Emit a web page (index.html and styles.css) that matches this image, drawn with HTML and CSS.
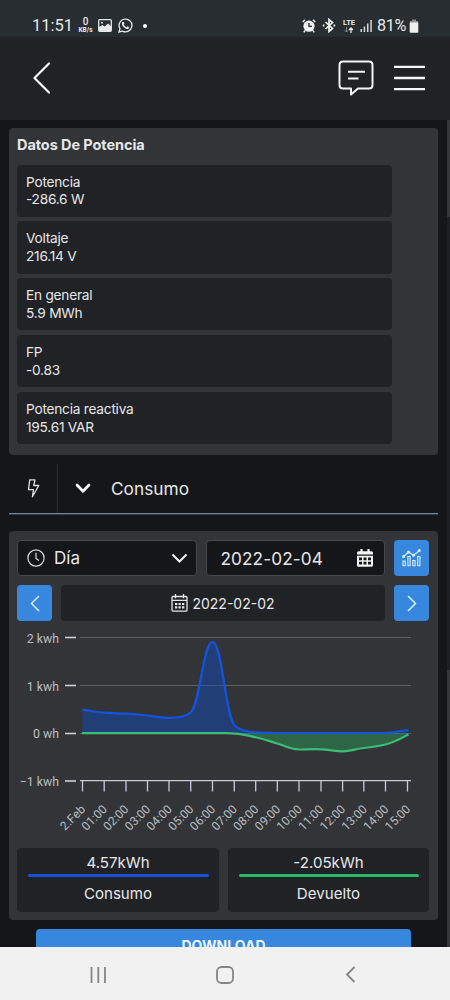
FILE: index.html
```html
<!DOCTYPE html>
<html lang="es">
<head>
<meta charset="utf-8">
<meta name="viewport" content="width=device-width">
<title>Datos De Potencia</title>
<link rel="stylesheet" href="styles.css">
</head>
<body>
<div class="phone">
  <div class="status">
    <span class="time">11:51</span>
    <span class="speed"><b>0</b><small>KB/s</small></span>
    <svg class="s-img" width="14" height="13" viewBox="0 0 14 13"><rect x=".7" y=".7" width="12.6" height="11.6" rx="1" fill="none" stroke="#e6e8e9" stroke-width="1.3"/><path d="M1 8 4.500 6 6.500 7.500 10 4.500 13 7V12H1Z" fill="#e6e8e9"/><circle cx="4" cy="3.700" r="1" fill="#e6e8e9"/></svg>
    <svg class="s-wa" width="15" height="15" viewBox="0 0 15 15" fill="none" stroke="#e6e8e9"><path d="M1 14 2 10.7A6.4 6.4 0 1 1 4.5 13.1Z" stroke-width="1.3"/><path d="M5.2 4.3C4.2 5 4.5 6.700 6.200 8.500S9.500 10.900 10.600 9.800" stroke-width="1.6"/><path d="m5 4.200 .9 1.600M8.900 9l1.700.8" stroke-width="1.600"/></svg>
    <i class="dot"></i>
    <span class="grow"></span>
    <svg width="14" height="14" viewBox="0 0 14 14"><path d="M3 .8.8 3M11 .8 13.200 3M3 11.500 1.800 13.300M11 11.500l1.200 1.800" stroke="#f0f1f1" stroke-width="1.500"/><circle cx="7" cy="7.200" r="5.600" fill="#f0f1f1"/><path d="M7 4v3.400h3" fill="none" stroke="#272d30" stroke-width="1.400"/></svg>
    <svg class="s-bt" width="14" height="15" viewBox="0 0 14 15" fill="none" stroke="#f0f1f1" stroke-width="1.700"><path d="m3.500 4 7 6.500L7 13.500v-12l3.500 3-7 6.500"/><path d="M.8 7.500h1.700M11.500 7.500h1.700" stroke-width="2"/></svg>
    <span class="lte">LTE<svg width="10" height="6" viewBox="0 0 10 6" fill="none" stroke="#e6e8e9"><path d="M2.500 0v5M.8 3.300l1.700 1.700 1.700-1.700" stroke="#8d9294" stroke-width=".9"/><path d="M7 6V1M5 3l2-2 2 2" stroke-width="1.300"/></svg></span>
    <svg class="s-sig" width="13" height="13" viewBox="0 0 13 13" fill="#d7dadb"><path d="M.5 10H2v3H.5zM3.700 7.500h1.500V13H3.700zM7 4.500h1.500V13H7zM10.300 1h1.500v12h-1.500z"/></svg>
    <span class="pct">81%</span>
    <svg class="s-bat" width="10" height="14" viewBox="0 0 10 14"><path d="M3 .5h4V2h2v2H1V2h2z" fill="#8d9294"/><path d="M.7 3.500h8.600V13q0 .8-.8.800h-7q-.8 0-.8-.8z" fill="#f0f1f1"/></svg>
  </div>

  <header class="header">
    <svg width="18" height="32" viewBox="0 0 18 32" fill="none" stroke="#fafafa" stroke-width="2.200" stroke-linecap="round" stroke-linejoin="round"><path d="M16 1.500 1.500 16 16 30.500"/></svg>
    <span class="grow"></span>
    <svg width="36" height="36" viewBox="0 0 36 36" fill="none" stroke="#f3f4f6" stroke-width="2" stroke-linejoin="round" stroke-linecap="round"><path d="M5 1.500H31Q34.500 1.500 34.500 5V25Q34.500 28.500 31 28.500H20L13 34.500V28.500H5Q1.500 28.500 1.500 25V5Q1.500 1.500 5 1.500Z"/><path d="M10 11.700H27M10 18.500H20.500" stroke-linecap="butt"/></svg>
    <svg class="burger" width="31" height="26" viewBox="0 0 31 26" stroke="#f6f6f7" stroke-width="2.300"><path d="M0 1.900H31M0 13H31M0 24.100H31"/></svg>
  </header>

  <main class="content">
    <section class="panel power">
      <h1>Datos De Potencia</h1>
      <div class="rows">
        <div class="row"><span>Potencia</span><span>-286.6 W</span></div>
        <div class="row"><span>Voltaje</span><span>216.14 V</span></div>
        <div class="row"><span>En general</span><span>5.9 MWh</span></div>
        <div class="row"><span>FP</span><span>-0.83</span></div>
        <div class="row"><span>Potencia reactiva</span><span>195.61 VAR</span></div>
      </div>
    </section>

    <div class="selector">
      <span class="bolt"><svg width="13" height="19" viewBox="0 0 13 19" fill="none" stroke="#dddee0" stroke-width="1.300" stroke-linejoin="round"><path d="M2.700.8H8L6.800 6.500H11.800L5.400 17.800 6.500 10.700H1.500Z"/></svg></span>
      <svg class="down" width="16" height="11" viewBox="0 0 16 11" fill="none" stroke="#fff" stroke-width="2.700" stroke-linecap="round" stroke-linejoin="round"><path d="m2 2 6 6.300L14 2"/></svg>
      <span>Consumo</span>
    </div>

    <section class="panel usage">
      <div class="controls">
        <div class="field day">
          <svg width="18" height="18" viewBox="0 0 18 18" fill="none" stroke="#dcdddf" stroke-width="1.200"><circle cx="9" cy="9" r="8.100"/><path d="M9 3.700V9.500l3 2"/></svg>
          <span>Día</span><span class="grow"></span>
          <svg width="17" height="11" viewBox="0 0 17 11" fill="none" stroke="#f2f2f3" stroke-width="2"><path d="m1.500 1.500 7 7 7-7"/></svg>
        </div>
        <div class="field date">
          <span>2022-02-04</span><span class="grow"></span>
          <svg width="16" height="18" viewBox="0 0 16 18"><path d="M4.500 0v4M11.500 0v4" stroke="#f5f5f5" stroke-width="2.200"/><path d="M1.500 2.200h13q1.500 0 1.500 1.500V5.500H0V3.700q0-1.500 1.500-1.500ZM0 6.700H16V16.200q0 1.500-1.500 1.500h-13Q0 17.700 0 16.200Z" fill="#f5f5f5"/><path d="M2 8.500h3v2.800H2zM6.500 8.500h3v2.800h-3zM11 8.500h3v2.800h-3zM2 12.700h3v2.800H2zM6.500 12.700h3v2.800h-3zM11 12.700h3v2.800h-3z" fill="#151619"/></svg>
        </div>
        <div class="btn">
          <svg width="19" height="18" viewBox="0 0 19 18" fill="none" stroke="#d8efff" stroke-width="1.100"><path d="M1 8 6.500 3 11.500 6.200 17.500 1.500" stroke-width="1.300"/><path d="M1 12h2.200v4.800H1zM5.900 7.500h2.200v9.300H5.900zM10.800 11.500H13v5.300h-2.200zM15.700 7.500h2.200v9.300h-2.200z"/><g fill="#d8efff" stroke="none"><circle cx="1.500" cy="7.600" r="1.500"/><circle cx="6.500" cy="3" r="1.500"/><circle cx="11.500" cy="6.200" r="1.500"/><circle cx="17.300" cy="1.600" r="1.500"/></g></svg>
        </div>
      </div>
      <div class="controls nav">
        <div class="btn"><svg width="10" height="17" viewBox="0 0 10 17" fill="none" stroke="#d8efff" stroke-width="1.500"><path d="M9 1 1.500 8.500 9 16"/></svg></div>
        <div class="current">
          <svg width="17" height="18" viewBox="0 0 17 18" fill="none" stroke="#e4e5e6" stroke-width="1.300"><rect x="1" y="2.500" width="15" height="14.600" rx="1"/><path d="M1 6.300H16M4.500 0v4.300M12.500 0v4.300"/><path d="M4 10h9.500M4 13.400h9.500" stroke-width="2.200" stroke-dasharray="2.300 1.200"/></svg>
          <span>2022-02-02</span>
        </div>
        <div class="btn"><svg width="10" height="17" viewBox="0 0 10 17" fill="none" stroke="#d8efff" stroke-width="1.500"><path d="M1 1 8.500 8.500 1 16"/></svg></div>
      </div>

      <svg class="chart" width="429" height="227" viewBox="9 621 429 227">
        <g stroke="#5b6063"><path d="M80 637.500H411M80 685.500H411M80 733.500H411"/></g>
        <g stroke="#d5d7de" stroke-width="1.500"><path d="M65 637.500H76M65 685.500H76M65 733.500H76M65 781H76"/></g>
        <path d="M80 780.700H411M82.500 781V791.500M104.200 781V791.500M126 781V791.500M147.500 781V791.500M169 781V791.500M190.700 781V791.500M212.500 781V791.500M234.300 781V791.500M255.700 781V791.500M277.300 781V791.500M299 781V791.500M321 781V791.500M342.600 781V791.500M363.800 781V791.500M385.500 781V791.500M407.500 781V791.500" fill="none" stroke="#c6c8dc" stroke-width="1.300"/>
        <path d="M82.500 709.700C91 710.800 95 712 104 712.700S117 713.200 126 713.700 139 714.700 147.500 715.500 160 717.800 169 717.800 185 717 190.700 712.500C200 705 203 642 212.500 642S225 713 234.300 725C239 730.500 247 732 255.700 732.300Q266 733 277 733H385C394 733 399 731 408.500 730V733.500H82.500Z" fill="#0c4dd0" fill-opacity=".42"/>
        <path d="M234 733.500C243 733.500 248 735.500 255.700 737.200S269 741 277.300 743.500 290 749.500 299 749.500 312 749 321 749.300 334 751.300 342.600 751.300 355 749 363.800 748 377 746.500 385.500 744.500 400 739 408 735V733.500Z" fill="#28a95b" fill-opacity=".42"/>
        <path d="M82 733.200H225C240 733.200 248 735.500 255.700 737.200S269 741 277.300 743.500 290 749.500 299 749.500 312 749 321 749.300 334 751.300 342.600 751.300 355 749 363.800 748 377 746.500 385.500 744.500 400 739 408.500 734.500" fill="none" stroke="#3bbd76" stroke-width="2.200"/>
        <path d="M82.500 709.700C91 710.800 95 712 104 712.700S117 713.200 126 713.700 139 714.700 147.500 715.500 160 717.800 169 717.800 185 717 190.700 712.500C200 705 203 642 212.500 642S225 713 234.300 725C239 730.500 247 732 255.700 732.300Q266 733 277 733H385C394 733 399 731 408.500 730" fill="none" stroke="#1453de" stroke-width="2.200"/>
        <g class="axis">
          <text x="59" y="643">2 kwh</text><text x="59" y="690.500">1 kwh</text><text x="59" y="738">0 wh</text><text x="59" y="786">−1 kwh</text>
        </g>
        <g class="axis hours">
          <text transform="translate(86 810) rotate(-45)">2.Feb</text>
          <text transform="translate(107.700 810) rotate(-45)">01:00</text>
          <text transform="translate(129.300 810) rotate(-45)">02:00</text>
          <text transform="translate(151 810) rotate(-45)">03:00</text>
          <text transform="translate(172.700 810) rotate(-45)">04:00</text>
          <text transform="translate(194.300 810) rotate(-45)">05:00</text>
          <text transform="translate(216 810) rotate(-45)">06:00</text>
          <text transform="translate(237.700 810) rotate(-45)">07:00</text>
          <text transform="translate(259.300 810) rotate(-45)">08:00</text>
          <text transform="translate(281 810) rotate(-45)">09:00</text>
          <text transform="translate(302.700 810) rotate(-45)">10:00</text>
          <text transform="translate(324.300 810) rotate(-45)">11:00</text>
          <text transform="translate(346 810) rotate(-45)">12:00</text>
          <text transform="translate(367.700 810) rotate(-45)">13:00</text>
          <text transform="translate(389.300 810) rotate(-45)">14:00</text>
          <text transform="translate(411 810) rotate(-45)">15:00</text>
        </g>
      </svg>

      <div class="totals">
        <div class="total"><span>4.57kWh</span><i class="bar blue"></i><span>Consumo</span></div>
        <div class="total"><span>-2.05kWh</span><i class="bar green"></i><span>Devuelto</span></div>
      </div>
    </section>
    <div class="download">DOWNLOAD</div>
    <div class="scroll"><i></i></div>
  </main>

  <nav class="android">
    <svg width="17" height="18" viewBox="0 0 17 18" stroke="#858585" stroke-width="1.800"><path d="M1.500 1V17M8.300 1V17M15 1V17"/></svg>
    <svg class="home" width="18" height="18" viewBox="0 0 18 18" fill="none" stroke="#858585" stroke-width="1.800"><rect x="1" y="1" width="16" height="16" rx="4.500"/></svg>
    <svg width="11" height="17" viewBox="0 0 11 17" fill="none" stroke="#858585" stroke-width="1.800"><path d="M9.500 1 2 8.500 9.500 16"/></svg>
  </nav>
</div>
</body>
</html>
```
FILE: styles.css
```css
* { box-sizing: border-box; }
body { margin: 0; background: #151619; font-family: Inter, "Liberation Sans", sans-serif; color: #e6e7e9; }
svg { display: block; flex: none; }
.phone { width: 450px; height: 1000px; display: flex; flex-direction: column; overflow: hidden; }
.grow { flex: 1; }

.status { height: 37px; flex: none; background: #272d30; display: flex; align-items: center; padding: 14px 31px 0 32px; font-family: Roboto, sans-serif; color: #e6e8e9; }
.time { font-size: 16.500px; width: 46px; line-height: 20px; padding-top: 1px; }
.speed { width: 15px; display: flex; flex-direction: column; align-items: center; line-height: 1; }
.speed b { font-size: 10px; line-height: 9px; font-weight: 500; }
.speed small { font-size: 6.500px; line-height: 8px; font-weight: 700; }
.s-img { margin-left: 5px; }
.s-wa { margin-left: 6px; }
.dot { width: 4px; height: 4px; border-radius: 50%; background: #fff; margin-left: 10px; }
.s-bt { margin-left: 6px; }
.lte { margin-left: 6px; width: 14px; font-size: 7.500px; font-weight: 700; line-height: 8px; display: flex; flex-direction: column; align-items: center; }
.s-sig { margin-left: 4px; }
.pct { font-size: 16.200px; margin-left: 4px; line-height: 20px; padding-top: 1px; width: 31px; letter-spacing: -.3px; }
.s-bat { margin-left: 1px; }

.header { height: 83px; flex: none; background: #212226; display: flex; align-items: center; padding: 0 25px 2px 33px; }
.burger { margin-left: 20px; }

.content { height: 827px; flex: none; position: relative; overflow: hidden; padding: 8px 12px 0 9px; }
.panel { background: #323438; border-radius: 4px; padding: 0 9px 0 8px; }
.power { height: 327px; }
.power h1 { margin: 0; font-size: 14.500px; line-height: 20px; font-weight: 700; height: 36.500px; padding-top: 6.500px; letter-spacing: -.08px; }
.rows { width: 375px; display: flex; flex-direction: column; gap: 4.700px; }
.row { height: 52.200px; background: #212226; border-radius: 4px; padding: 9px 9px 0; display: flex; flex-direction: column; font-size: 13.700px; line-height: 17.500px; letter-spacing: -.24px; }

.selector { height: 50px; margin-top: 9px; border-bottom: 1px solid #77839a; box-shadow: 0 1px 0 #343b45; display: flex; align-items: center; font-size: 17.300px; }
.bolt { width: 49px; align-self: stretch; display: flex; align-items: center; justify-content: center; border-right: 1px solid #2b2d30; }
.down { margin: 0 20px 0 17px; }

.usage { margin-top: 17px; height: 389px; padding-top: 9px; }
.controls { display: grid; grid-template-columns: 180px 179px 35px; column-gap: 9px; height: 36px; }
.nav { grid-template-columns: 35px 324px 35px; margin-top: 9px; }
.field { background: #151619; border: 1px solid #45474b; border-radius: 4px; display: flex; align-items: center; font-size: 17px; }
.day { padding: 0 8px 0 9px; gap: 9px; }
.date { padding: 0 11px 0 13.500px; font-size: 17.200px; letter-spacing: .1px; }
.btn { background: #3787de; border-radius: 4px; display: flex; align-items: center; justify-content: center; }
.current { background: #212226; border-radius: 4px; display: flex; align-items: center; justify-content: center; gap: 4px; font-size: 14px; }
.chart { margin: 0 -9px 0 -8px; }
.axis text { font-family: Roboto, sans-serif; font-size: 12.300px; fill: #bcbec1; text-anchor: end; }
.axis.hours text { font-size: 12px; }

.totals { display: grid; grid-template-columns: 202px 201px; gap: 9px; }
.total { height: 64px; background: #212226; border-radius: 4px; display: flex; flex-direction: column; align-items: center; font-size: 15.100px; line-height: 20px; padding: 5px 10.500px 0; }
.bar { width: 100%; height: 3px; border-radius: 2px; margin: 1px 0 7px; }
.blue { background: #1851d5; }
.green { background: #29ba66; }
.download { margin: 9px 27px 0 27px; height: 36px; background: #3787de; border-radius: 4px; text-align: center; font-weight: 700; font-size: 14px; line-height: 34px; color: #eef6fd; }
.scroll { position: absolute; top: 0; right: 0; width: 3px; height: 827px; background: #35363a; }
.scroll i { display: block; margin-top: 97px; height: 453px; background: #1e1f24; }

.android { height: 53px; flex: none; background: #f1f1f1; display: grid; grid-template-columns: 125.500px 129px 11px; align-items: center; padding: 2px 0 0 90px; }
```
